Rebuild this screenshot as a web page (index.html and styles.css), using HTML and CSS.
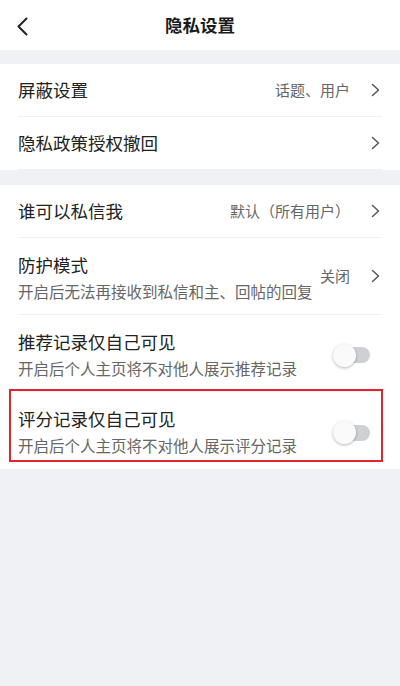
FILE: index.html
```html
<!DOCTYPE html>
<html lang="zh-CN">
<head>
<meta charset="utf-8">
<title>隐私设置</title>
<link rel="stylesheet" href="styles.css">
</head>
<body>
<div class="page">
  <header class="topbar">
    <svg class="back" width="12" height="19" viewBox="0 0 12 19"><path d="M10.5 1.5 L2.5 9.5 L10.5 17.5" fill="none" stroke="#222" stroke-width="2" stroke-linecap="round" stroke-linejoin="round"/></svg>
    <h1 class="title">隐私设置</h1>
  </header>

  <section class="group first">
    <div class="row">
      <span class="label">屏蔽设置</span>
      <span class="value">话题、用户</span>
      <svg class="chev" width="9" height="14" viewBox="0 0 9 14"><path d="M1.5 1.5 L7.5 7 L1.5 12.5" fill="none" stroke="#555" stroke-width="1.5" stroke-linecap="round" stroke-linejoin="round"/></svg>
    </div>
    <div class="row">
      <span class="label">隐私政策授权撤回</span>
      <svg class="chev" width="9" height="14" viewBox="0 0 9 14"><path d="M1.5 1.5 L7.5 7 L1.5 12.5" fill="none" stroke="#555" stroke-width="1.5" stroke-linecap="round" stroke-linejoin="round"/></svg>
    </div>
  </section>

  <section class="group">
    <div class="row">
      <span class="label">谁可以私信我</span>
      <span class="value">默认（所有用户）</span>
      <svg class="chev" width="9" height="14" viewBox="0 0 9 14"><path d="M1.5 1.5 L7.5 7 L1.5 12.5" fill="none" stroke="#555" stroke-width="1.5" stroke-linecap="round" stroke-linejoin="round"/></svg>
    </div>
    <div class="row tall">
      <div class="text">
        <div class="label">防护模式</div>
        <div class="sub">开启后无法再接收到私信和主、回帖的回复</div>
      </div>
      <span class="value near">关闭</span>
      <svg class="chev" width="9" height="14" viewBox="0 0 9 14"><path d="M1.5 1.5 L7.5 7 L1.5 12.5" fill="none" stroke="#555" stroke-width="1.5" stroke-linecap="round" stroke-linejoin="round"/></svg>
    </div>
    <div class="row tall">
      <div class="text">
        <div class="label">推荐记录仅自己可见</div>
        <div class="sub">开启后个人主页将不对他人展示推荐记录</div>
      </div>
      <span class="toggle"><span class="knob"></span></span>
    </div>
    <div class="row tall last">
      <div class="text">
        <div class="label">评分记录仅自己可见</div>
        <div class="sub">开启后个人主页将不对他人展示评分记录</div>
      </div>
      <span class="toggle"><span class="knob"></span></span>
      <span class="highlight"></span>
    </div>
  </section>
</div>
</body>
</html>
```

FILE: styles.css
```css
* { box-sizing: border-box; }
html, body {
  margin: 0;
  padding: 0;
  background: #eff1f5;
}
body {
  font-family: "Noto Sans CJK SC", "Noto Sans", sans-serif;
  color: #222;
}
.page {
  width: 400px;
  min-height: 686px;
  background: #eff1f5;
}
.topbar {
  height: 50px;
  background: #fff;
  display: flex;
  align-items: center;
  justify-content: center;
  position: relative;
}
.back {
  position: absolute;
  left: 16px;
  top: 17px;
}
.title {
  margin: 0;
  font-size: 17.5px;
  font-weight: 700;
  color: #1a1a1a;
  line-height: 24px;
}
.group {
  background: #fff;
  margin-top: 14px;
}
.group + .group { margin-top: 15px; }
.row {
  margin: 0 18px;
  height: 53px;
  display: flex;
  align-items: center;
  border-bottom: 1px solid #eef0f3;
  position: relative;
}
.row.tall {
  height: 77px;
  align-items: flex-start;
}
.row.last { border-bottom: none; }
.label {
  font-size: 17.5px;
  line-height: 24px;
  color: #222;
  flex: 1;
  white-space: nowrap;
}
.text {
  flex: 1;
  padding-top: 15px;
}
.sub {
  font-size: 15.5px;
  line-height: 22px;
  margin-top: 3px;
  color: #666;
  white-space: nowrap;
}
.value {
  font-size: 15px;
  line-height: 22px;
  color: #666;
  margin-right: 21px;
  white-space: nowrap;
}
.row.tall .value,
.row.tall .chev { align-self: center; }
.value.near { margin-left: 4px; }
.chev {
  flex: none;
  margin-right: 2px;
}
.toggle {
  align-self: center;
  margin-top: 4px;
  width: 37px;
  height: 16px;
  border-radius: 8px;
  background: #cfd0d4;
  margin-right: 12px;
  position: relative;
  flex: none;
}
.knob {
  position: absolute;
  left: 0;
  top: -3.5px;
  width: 23px;
  height: 23px;
  border-radius: 50%;
  background: #fafafa;
  box-shadow: 0 1px 3px rgba(0,0,0,0.28);
}
.highlight {
  position: absolute;
  left: -9px;
  right: -1px;
  top: -3px;
  height: 73px;
  border: 2px solid #e3242b;
  pointer-events: none;
}
```
